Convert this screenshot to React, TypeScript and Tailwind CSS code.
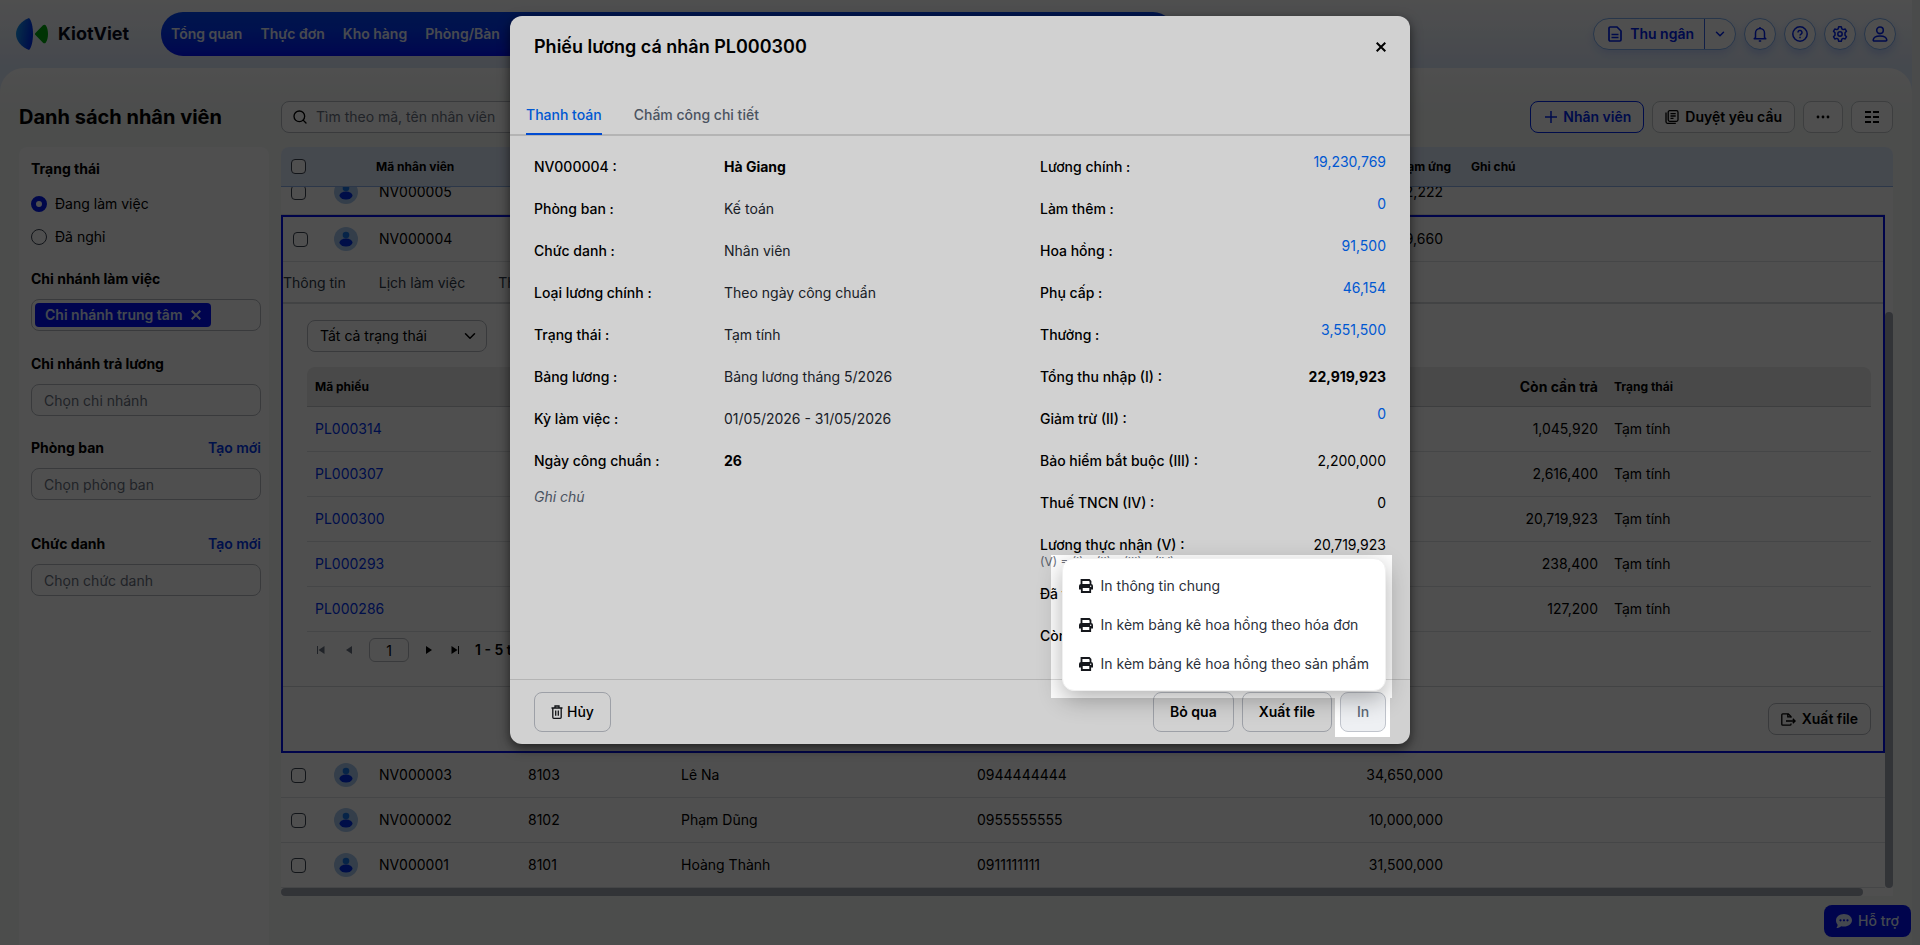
import type { ReactNode } from "react";
import { ChevronDown, Search } from "lucide-react";

const navItems = ["Tổng quan", "Thực đơn", "Kho hàng", "Phòng/Bàn"];

const payslips = [
    { code: "PL000314", due: "1,045,920" },
    { code: "PL000307", due: "2,616,400" },
    { code: "PL000300", due: "20,719,923" },
    { code: "PL000293", due: "238,400" },
    { code: "PL000286", due: "127,200" },
];

const employees = [
    { code: "NV000003", pin: "8103", name: "Lê Na", phone: "0944444444", debt: "34,650,000" },
    { code: "NV000002", pin: "8102", name: "Phạm Dũng", phone: "0955555555", debt: "10,000,000" },
    { code: "NV000001", pin: "8101", name: "Hoàng Thành", phone: "0911111111", debt: "31,500,000" },
];

const info = [
    { label: "NV000004 :", value: "Hà Giang", bold: true },
    { label: "Phòng ban :", value: "Kế toán" },
    { label: "Chức danh :", value: "Nhân viên" },
    { label: "Loại lương chính :", value: "Theo ngày công chuẩn" },
    { label: "Trạng thái :", value: "Tạm tính" },
    { label: "Bảng lương :", value: "Bảng lương tháng 5/2026" },
    { label: "Kỳ làm việc :", value: "01/05/2026 - 31/05/2026" },
    { label: "Ngày công chuẩn :", value: "26", bold: true },
];

const salary = [
    { label: "Lương chính :", value: "19,230,769", link: true },
    { label: "Làm thêm :", value: "0", link: true },
    { label: "Hoa hồng :", value: "91,500", link: true },
    { label: "Phụ cấp :", value: "46,154", link: true },
    { label: "Thưởng :", value: "3,551,500", link: true },
    { label: "Tổng thu nhập (I) :", value: "22,919,923", bold: true },
    { label: "Giảm trừ (II) :", value: "0", link: true },
    { label: "Bảo hiểm bắt buộc (III) :", value: "2,200,000" },
    { label: "Thuế TNCN (IV) :", value: "0" },
];

const printOptions = [
    "In thông tin chung",
    "In kèm bảng kê hoa hồng theo hóa đơn",
    "In kèm bảng kê hoa hồng theo sản phẩm",
];

function Logo() {
    return (
        <svg width="32" height="32" viewBox="0 0 32 32" aria-hidden="true">
            <defs>
                <linearGradient id="logo-blue" x1="0" y1="0" x2="1" y2="0.3">
                    <stop offset="0" stopColor="#18a0e8" />
                    <stop offset="1" stopColor="#0030f0" />
                </linearGradient>
            </defs>
            <path d="M13 0C5.500 3 0 9 0 16s5.500 13 13 16c2.500-2.500 4-9 4-16S15.500 2.500 13 0Z" fill="url(#logo-blue)" />
            <path d="M19.200 15.200 27 7.300c.8-.8 2-.9 2.700 0C31.200 9.200 32 12.500 32 16s-.8 6.800-2.300 8.700c-.7.900-1.900.8-2.700 0l-7.800-7.900c-.4-.5-.4-1.100 0-1.600Z" fill="#00a810" />
        </svg>
    );
}

function PrinterIcon() {
    return (
        <svg width="14" height="14" viewBox="0 0 14 14" fill="none" aria-hidden="true">
            <path d="M2.500 5.500V1h7.700l1.300 1.300v3.200" stroke="#15171c" strokeWidth="1.800" />
            <path d="M2 5h10a2 2 0 0 1 2 2v3.500h-2V9H2v1.500H0V7a2 2 0 0 1 2-2Z" fill="#15171c" />
            <path d="M2.800 9v4h8.400V9" stroke="#15171c" strokeWidth="1.800" />
            <circle cx="11.700" cy="7.200" r=".7" fill="#fff" />
        </svg>
    );
}

function TrashIcon() {
    return (
        <svg width="12" height="14" viewBox="0 0 12 14" fill="none" stroke="#15171c" strokeWidth="1.300" aria-hidden="true">
            <path d="M.5 3h11M4 2.800V1h4v1.800M1.800 3v9.300c0 .6.400 1 1 1h6.400c.6 0 1-.4 1-1V3M4.700 5.500v5.300M7.300 5.500v5.300" />
        </svg>
    );
}

function Avatar() {
    return (
        <svg width="24" height="24" viewBox="0 0 24 24" aria-hidden="true">
            <circle cx="12" cy="12" r="12" fill="#a8c8ee" />
            <circle cx="12" cy="8" r="3.300" fill="#1a78e8" />
            <ellipse cx="12" cy="15.500" rx="6.500" ry="4" fill="#0030e8" />
        </svg>
    );
}

function Check({ label }: { label: string }) {
    return (
        <input
            type="checkbox"
            aria-label={label}
            className="block size-[15px] appearance-none rounded-[4px] border border-[#3c4453] bg-white"
        />
    );
}

function IconButton({ label, children }: { label: string; children: ReactNode }) {
    return (
        <button
            type="button"
            aria-label={label}
            className="flex size-8 items-center justify-center rounded-full border border-[#80b0f0] bg-white text-[#0022f0] shadow-[0_4px_8px_rgba(0,80,255,0.2)]"
        >
            {children}
        </button>
    );
}

function Header() {
    return (
        <header className="flex h-17 items-center bg-linear-to-b from-white to-[#dfe9fb] px-4">
            <div className="flex w-[145px] items-center gap-2.5">
                <Logo />
                <span className="text-lg font-bold text-[#0a0d1c]">KiotViet</span>
            </div>
            <nav className="flex h-11 w-[1014px] items-center gap-[18px] rounded-full bg-linear-to-b from-[#0048f8] to-[#0010ff] pl-2.5 text-sm font-semibold text-[#e8eeff]">
                {navItems.map((item) => (
                    <a key={item} href="#">{item}</a>
                ))}
            </nav>
            <div className="ml-auto flex items-center gap-2 text-[#0022f0]">
                <div className="flex h-8 items-center rounded-full border border-[#80b0f0] bg-white shadow-[0_4px_8px_rgba(0,80,255,0.15)]">
                    <button type="button" className="flex h-full items-center gap-2 pr-2.5 pl-3.5 text-sm font-semibold">
                        <svg width="14" height="16" viewBox="0 0 14 16" fill="none" stroke="currentColor" strokeWidth="1.700" aria-hidden="true">
                            <path d="M1 2.200C1 1.500 1.500 1 2.200 1H9l4 4v8.800c0 .7-.5 1.200-1.200 1.200H2.200C1.500 15 1 14.500 1 13.800V2.200ZM3.500 8.500h7M3.500 11.500h7" />
                        </svg>
                        Thu ngân
                    </button>
                    <button type="button" aria-label="Mở danh sách" className="flex h-full w-[31px] items-center justify-center border-l border-[#3868e8]">
                        <ChevronDown size={14} strokeWidth={2.5} />
                    </button>
                </div>
                <IconButton label="Thông báo">
                    <svg width="16" height="16" viewBox="0 0 16 16" fill="none" stroke="currentColor" strokeWidth="1.500" aria-hidden="true">
                        <path d="M3.500 11.500V7a4.500 4.500 0 0 1 9 0v4.500l1.300 1.200H2.200l1.300-1.200ZM6.800 15h2.400M8 1v1.500" strokeLinejoin="round" />
                    </svg>
                </IconButton>
                <IconButton label="Trợ giúp">
                    <svg width="16" height="16" viewBox="0 0 16 16" fill="none" stroke="currentColor" strokeWidth="1.500" aria-hidden="true">
                        <circle cx="8" cy="8" r="7.200" />
                        <path d="M6 6.400a2 2 0 1 1 3.200 1.600c-.7.500-1.200.8-1.200 1.500M8 10.800v1.400" />
                    </svg>
                </IconButton>
                <IconButton label="Thiết lập">
                    <svg width="16" height="16" viewBox="0 0 16 16" fill="none" stroke="currentColor" strokeWidth="1.500" strokeLinejoin="round" aria-hidden="true">
                        <path d="M6.700.8h2.600l.5 2 1.400.8 2-.6 1.300 2.300L13 6.800v2.400l1.500 1.500-1.300 2.300-2-.6-1.400.8-.5 2H6.700l-.5-2-1.400-.8-2 .6-1.300-2.300L3 9.200V6.800L1.500 5.300 2.800 3l2 .6 1.400-.8.500-2Z" />
                        <circle cx="8" cy="8" r="2.200" />
                    </svg>
                </IconButton>
                <IconButton label="Tài khoản">
                    <svg width="16" height="16" viewBox="0 0 16 16" fill="none" stroke="currentColor" strokeWidth="1.600" aria-hidden="true">
                        <circle cx="8" cy="4.300" r="3.300" />
                        <path d="M2.200 15c-.6 0-1-.4-1-1 .3-2.600 2.600-4 6.800-4s6.500 1.400 6.800 4c0 .6-.4 1-1 1H2.200Z" />
                    </svg>
                </IconButton>
            </div>
        </header>
    );
}

function FilterField({ id, label, placeholder, create }: { id: string; label: string; placeholder: string; create?: boolean }) {
    return (
        <div className="flex flex-col gap-2.5">
            <div className="flex items-center justify-between">
                <label htmlFor={id} className="font-bold">{label}</label>
                {create && <a href="#" className="font-semibold text-[#0038f0]">Tạo mới</a>}
            </div>
            <input id={id} placeholder={placeholder} className="h-8 rounded-lg border border-[#b8bcc2] px-3 placeholder:text-[#6b7280]" />
        </div>
    );
}

function Sidebar() {
    return (
        <aside className="flex min-h-0 flex-1 flex-col rounded-t-lg bg-white pt-3 pr-2 pl-3">
            <fieldset className="flex flex-col">
                <legend className="font-bold">Trạng thái</legend>
                <label className="mt-[15px] flex items-center gap-2">
                    <input type="radio" name="status" defaultChecked className="size-4 appearance-none rounded-full border border-[#3c4453] checked:border-[5px] checked:border-[#0018f0]" />
                    Đang làm việc
                </label>
                <label className="mt-[13px] flex items-center gap-2">
                    <input type="radio" name="status" className="size-4 appearance-none rounded-full border border-[#3c4453]" />
                    Đã nghỉ
                </label>
            </fieldset>
            <div className="mt-[22px] font-bold">Chi nhánh làm việc</div>
            <div className="mt-2.5 flex h-8 items-center rounded-lg border border-[#b8bcc2] pl-[3px]">
                <span className="flex h-6 items-center gap-2 rounded-[4px] bg-[#0010ff] px-2.5 font-semibold text-[#dde6ff]">
                    Chi nhánh trung tâm
                    <button type="button" aria-label="Bỏ chọn">
                        <svg width="10" height="10" viewBox="0 0 10 10" stroke="currentColor" strokeWidth="2" aria-hidden="true">
                            <path d="m.7.7 8.600 8.600m0-8.600L.7 9.300" />
                        </svg>
                    </button>
                </span>
            </div>
            <div className="mt-[23px]">
                <FilterField id="pay-branch" label="Chi nhánh trả lương" placeholder="Chọn chi nhánh" />
            </div>
            <div className="mt-[22px]">
                <FilterField id="department" label="Phòng ban" placeholder="Chọn phòng ban" create />
            </div>
            <div className="mt-[34px]">
                <FilterField id="position" label="Chức danh" placeholder="Chọn chức danh" create />
            </div>
        </aside>
    );
}

function Toolbar() {
    return (
        <div className="flex items-center gap-2">
            <label className="flex h-8 w-[420px] items-center gap-2 rounded-lg border border-[#b8bcc2] bg-white px-2.5">
                <Search size={16} strokeWidth={2} />
                <input aria-label="Tìm nhân viên" placeholder="Tìm theo mã, tên nhân viên" className="flex-1 placeholder:text-[#6b7280]" />
            </label>
            <button type="button" className="ml-auto flex h-8 items-center gap-1.5 rounded-lg border border-[#0028f0] bg-white pr-3 pl-3.5 font-semibold text-[#0028f0]">
                <svg width="12" height="12" viewBox="0 0 12 12" stroke="currentColor" strokeWidth="1.500" aria-hidden="true">
                    <path d="M6 0v12M0 6h12" />
                </svg>
                Nhân viên
            </button>
            <button type="button" className="flex h-8 items-center gap-1.5 rounded-lg border border-[#c4c8cc] bg-white px-3 font-semibold">
                <svg width="14" height="14" viewBox="0 0 14 14" fill="none" stroke="currentColor" strokeWidth="1.300" aria-hidden="true">
                    <rect x="3.200" y=".7" width="9.800" height="10.600" rx="1.500" />
                    <path d="M5.500 3.700h5.200M5.500 6h5.200M5.500 8.300h3M1 2.500v9.300c0 .9.600 1.500 1.500 1.500h8.300" />
                </svg>
                Duyệt yêu cầu
            </button>
            <button type="button" aria-label="Thêm" className="flex h-8 w-10 items-center justify-center rounded-lg border border-[#c4c8cc] bg-white">
                <svg width="14" height="4" viewBox="0 0 14 4" aria-hidden="true">
                    <circle cx="2" cy="2" r="1.400" /><circle cx="7" cy="2" r="1.400" /><circle cx="12" cy="2" r="1.400" />
                </svg>
            </button>
            <button type="button" aria-label="Chọn cột" className="flex h-8 w-[42px] items-center justify-center rounded-lg border border-[#c4c8cc] bg-white">
                <svg width="16" height="14" viewBox="0 0 16 14" stroke="currentColor" strokeWidth="1.800" aria-hidden="true">
                    <path d="M1 2h6M9 2h6M1 7h6M9 7h6M1 12h6M9 12h6" />
                </svg>
            </button>
        </div>
    );
}

function Columns() {
    return (
        <colgroup>
            <col className="w-[53px]" />
            <col className="w-[45px]" />
            <col className="w-[149px]" />
            <col className="w-[153px]" />
            <col className="w-[296px]" />
            <col className="w-[276px]" />
            <col className="w-[198px]" />
            <col />
        </colgroup>
    );
}

type Employee = { code: string; pin?: string; name?: string; phone?: string; debt: string };

function EmployeeRow({ row }: { row: Employee }) {
    return (
        <tr className="h-[45px] [&>td]:border-b [&>td]:border-[#dfe1e4]">
            <td className="pl-2.5"><Check label={row.code} /></td>
            <td><Avatar /></td>
            <td>{row.code}</td>
            <td>{row.pin}</td>
            <td>{row.name}</td>
            <td>{row.phone}</td>
            <td className="pr-2 text-right">{row.debt}</td>
            <td />
        </tr>
    );
}

function EmployeeDetail() {
    return (
        <section className="border-2 border-[#0010f0]">
            <div className="flex h-[45px] items-center border-b border-[#dfe1e4] pl-2.5">
                <div className="w-[41px]"><Check label="NV000004" /></div>
                <div className="w-[45px]"><Avatar /></div>
                <div className="w-[149px]">NV000004</div>
                <div className="w-[915px] text-right">9,660</div>
            </div>
            <div className="flex h-[42px] items-center gap-[33px] border-b-2 border-[#d4d7db] pt-0.5 text-[#303a4a]">
                <a href="#">Thông tin</a>
                <a href="#">Lịch làm việc</a>
                <a href="#">Thiết lập lương</a>
            </div>
            <div className="pt-4 pr-3 pl-6">
                <div className="relative w-[180px]">
                    <select aria-label="Trạng thái phiếu" className="h-8 w-full appearance-none rounded-lg border border-[#b8bcc2] bg-white px-3">
                        <option>Tất cả trạng thái</option>
                    </select>
                    <ChevronDown size={18} className="pointer-events-none absolute top-[7px] right-2" />
                </div>
                <table className="mt-[15px] w-full table-fixed border-separate border-spacing-0">
                    <colgroup>
                        <col />
                        <col className="w-[300px]" />
                        <col className="w-[265px]" />
                    </colgroup>
                    <thead>
                        <tr className="h-10 text-left text-xs">
                            <th className="rounded-tl-lg border-b border-[#c4c8cc] bg-[#ececec] pl-2">Mã phiếu</th>
                            <th className="border-b border-[#c4c8cc] bg-[#ececec] pr-2 text-right text-sm">Còn cần trả</th>
                            <th className="rounded-tr-lg border-b border-[#c4c8cc] bg-[#ececec] pl-2">Trạng thái</th>
                        </tr>
                    </thead>
                    <tbody>
                        {payslips.map((slip) => (
                            <tr key={slip.code} className="h-[45px]">
                                <td className="border-b border-[#dfe1e4] pl-2"><a href="#" className="text-[#0032f0]">{slip.code}</a></td>
                                <td className="border-b border-[#dfe1e4] pr-2 text-right">{slip.due}</td>
                                <td className="border-b border-[#dfe1e4] pl-2">Tạm tính</td>
                            </tr>
                        ))}
                    </tbody>
                </table>
                <div className="mt-1.5 flex h-6 items-center">
                    <button type="button" aria-label="Trang đầu" className="flex w-7 justify-center text-[#6b7280]">
                        <svg width="8" height="8" viewBox="0 0 8 8" fill="currentColor" aria-hidden="true"><path d="M0 0h1v8H0zM7.500 0v8L1.500 4z" /></svg>
                    </button>
                    <button type="button" aria-label="Trang trước" className="flex w-7 justify-center text-[#6b7280]">
                        <svg width="8" height="8" viewBox="0 0 8 8" fill="currentColor" aria-hidden="true"><path d="M7 0v8L1 4z" /></svg>
                    </button>
                    <input aria-label="Trang" defaultValue="1" className="mx-1.5 h-6 w-10 rounded-md border border-[#b8bcc2] text-center" />
                    <button type="button" aria-label="Trang sau" className="flex w-7 justify-center">
                        <svg width="8" height="8" viewBox="0 0 8 8" fill="currentColor" aria-hidden="true"><path d="M1 0v8l6-4z" /></svg>
                    </button>
                    <button type="button" aria-label="Trang cuối" className="flex w-6 justify-center">
                        <svg width="8" height="8" viewBox="0 0 8 8" fill="currentColor" aria-hidden="true"><path d="M7 0h1v8H7zM.5 0v8l6-4z" /></svg>
                    </button>
                    <span className="ml-2 font-semibold">1 - 5 trong</span>
                </div>
            </div>
            <div className="mt-6 flex h-[65px] items-center justify-end border-t border-[#d4d7db] pr-3">
                <button type="button" className="flex h-8 items-center gap-1.5 rounded-lg border border-[#b8bcc2] px-3 font-semibold">
                    <svg width="15" height="13" viewBox="0 0 15 13" fill="none" stroke="currentColor" strokeWidth="1.300" aria-hidden="true">
                        <path d="M10 4.800V3.500L7.300.8H1.800c-.6 0-1 .4-1 1v9.400c0 .6.400 1 1 1h7.200c.6 0 1-.4 1-1v-.8M6.800.8v3h3.200M5 8h9M11.800 5.700 14.100 8l-2.300 2.300" />
                    </svg>
                    Xuất file
                </button>
            </div>
        </section>
    );
}

function EmployeeTable() {
    return (
        <div className="overflow-hidden rounded-t-lg bg-white">
            <table className="w-full table-fixed border-separate border-spacing-0">
                <Columns />
                <thead>
                    <tr className="h-10 bg-[#e0eafb] text-left text-xs [&>th]:border-b [&>th]:border-[#8fb4ea]">
                        <th className="pl-2.5"><Check label="Chọn tất cả" /></th>
                        <th colSpan={2} className="pl-[42px]">Mã nhân viên</th>
                        <th />
                        <th />
                        <th />
                        <th className="text-right">Nợ và tạm ứng</th>
                        <th className="pl-5">Ghi chú</th>
                    </tr>
                </thead>
            </table>
            <div className="flex overflow-hidden">
                {/* list is scrolled a little, the first row slides under the header */}
                <div className="-mt-[17px] min-w-0 flex-1">
                    <table className="w-full table-fixed border-separate border-spacing-0">
                        <Columns />
                        <tbody>
                            <EmployeeRow row={{ code: "NV000005", debt: "2,222" }} />
                        </tbody>
                    </table>
                    <EmployeeDetail />
                    <table className="w-full table-fixed border-separate border-spacing-0">
                        <Columns />
                        <tbody>
                            {employees.map((row) => (
                                <EmployeeRow key={row.code} row={row} />
                            ))}
                        </tbody>
                    </table>
                </div>
                <div className="flex w-2 flex-col pt-[125px]">
                    <div className="flex-1 rounded-full bg-[#a4a8b4]" />
                </div>
            </div>
            <div className="h-2 pr-[30px]">
                <div className="h-2 rounded-full bg-[#a4a8b4]" />
            </div>
        </div>
    );
}

function PrintMenu() {
    return (
        <ul className="absolute right-0 bottom-[41px] z-10 flex flex-col rounded-xl border border-[#f0f0f0] bg-white py-[7px] font-normal whitespace-nowrap text-[#2b303a] shadow-[0_8px_24px_rgba(0,0,0,0.3)]">
            {printOptions.map((option) => (
                <li key={option}>
                    <button type="button" className="flex h-[39px] w-full items-center gap-2 px-4">
                        <PrinterIcon />
                        {option}
                    </button>
                </li>
            ))}
        </ul>
    );
}

function PayslipDialog() {
    return (
        <div role="dialog" aria-labelledby="payslip-title" className="flex w-[900px] flex-col rounded-xl bg-white shadow-[0_4px_12px_rgba(0,0,0,0.6)]">
            <div className="flex h-[62px] items-center justify-between px-6">
                <h2 id="payslip-title" className="text-lg font-semibold">Phiếu lương cá nhân PL000300</h2>
                <button type="button" aria-label="Đóng">
                    <svg width="10" height="10" viewBox="0 0 10 10" stroke="currentColor" strokeWidth="2" aria-hidden="true">
                        <path d="m.7.7 8.600 8.600m0-8.600L.7 9.300" />
                    </svg>
                </button>
            </div>
            <div className="mt-4 flex h-[42px] gap-8 border-b-2 border-[#dcdcdc] px-4 font-medium">
                <button type="button" className="-mb-px flex items-center border-b-2 border-[#005cff] pt-0.5 text-[#006cff]">Thanh toán</button>
                <button type="button" className="flex items-center pt-0.5 text-[#5b6676]">Chấm công chi tiết</button>
            </div>
            <div className="grid grid-cols-[506px_1fr] px-6 pt-2.5 pb-[22px]">
                <div>
                    {info.map((row) => (
                        <div key={row.label} className="flex h-[42px] items-center">
                            <span className="w-[190px] font-medium">{row.label}</span>
                            <span className={row.bold ? "font-bold" : "text-[#23272f]"}>{row.value}</span>
                        </div>
                    ))}
                    <p className="mt-[5px] text-[#5b6676] italic">Ghi chú</p>
                </div>
                <div>
                    {salary.map((row) => (
                        <div key={row.label} className="flex h-[42px] items-center justify-between">
                            <span className="font-medium">{row.label}</span>
                            {row.link ? (
                                <a href="#" className="pb-2.5 text-[#006cff]">{row.value}</a>
                            ) : (
                                <span className={row.bold ? "font-bold" : ""}>{row.value}</span>
                            )}
                        </div>
                    ))}
                    <div className="flex h-[49px] justify-between pt-[11px]">
                        <div className="font-medium">
                            Lương thực nhận (V) :
                            <small className="block text-xs leading-[14px] font-normal text-[#6b7280]">(V) = (I) - (II) - (III) - (IV)</small>
                        </div>
                        <span>20,719,923</span>
                    </div>
                    <div className="flex h-[42px] items-center font-medium">Đã trả :</div>
                    <div className="flex h-[42px] items-center font-medium">Còn cần trả :</div>
                </div>
            </div>
            <div className="flex h-[65px] items-center gap-2 border-t border-[#dcdcdc] px-6 font-semibold">
                <button type="button" className="mr-auto flex h-10 items-center gap-1 rounded-lg border border-[#c0c4cc] px-4 font-medium">
                    <TrashIcon />
                    Hủy
                </button>
                <button type="button" className="h-10 rounded-lg border border-[#c0c4cc] px-4">Bỏ qua</button>
                <button type="button" className="h-10 rounded-lg border border-[#c0c4cc] px-4">Xuất file</button>
                <div className="relative">
                    <button type="button" className="h-10 w-[46px] rounded-lg border border-[#c0c4cc] bg-[#eef0f3] font-medium text-[#5b6676]">In</button>
                    <PrintMenu />
                </div>
            </div>
        </div>
    );
}

export default function App() {
    return (
        <div className="relative h-screen overflow-hidden bg-[#f0f2f1] font-['Inter','Noto_Sans',sans-serif] text-sm leading-5 text-black">
            <div className="flex h-full flex-col pr-2">
                <Header />
                <div className="min-h-0 flex-1 bg-[#dfe9fb]">
                    <main className="flex h-full gap-3 rounded-t-[24px] bg-linear-to-b from-white to-[#f3f7f5] to-5% px-[19px] pt-[33px]">
                        <div className="flex w-[250px] flex-col gap-3.5">
                            <h1 className="flex h-8 items-center text-xl font-bold">Danh sách nhân viên</h1>
                            <Sidebar />
                        </div>
                        <div className="flex min-w-0 flex-1 flex-col gap-3.5">
                            <Toolbar />
                            <EmployeeTable />
                        </div>
                    </main>
                </div>
            </div>
            <button type="button" className="absolute right-[9px] bottom-2 flex h-8 items-center gap-1.5 rounded-lg bg-[#0010f8] px-3 font-medium text-[#dde6ff]">
                <svg width="16" height="14" viewBox="0 0 16 14" fill="currentColor" aria-hidden="true">
                    <path fillRule="evenodd" d="M8 0c4.400 0 8 2.800 8 6.300s-3.600 6.300-8 6.300c-1 0-2-.2-2.900-.4C4 13.200 2.300 14 .4 14c.7-.9 1.200-2.100 1.200-3.300C.6 9.500 0 8 0 6.300 0 2.800 3.600 0 8 0ZM4.500 5.200a1.100 1.100 0 1 0 0 2.200 1.100 1.100 0 0 0 0-2.200Zm3.500 0a1.100 1.100 0 1 0 0 2.200 1.100 1.100 0 0 0 0-2.200Zm3.500 0a1.100 1.100 0 1 0 0 2.200 1.100 1.100 0 0 0 0-2.200Z" />
                </svg>
                Hỗ trợ
            </button>

            <div className="absolute inset-0 flex items-start justify-center bg-black/62 pt-4">
                <PayslipDialog />
            </div>

            {/* guide overlay with an opening around the print menu and its button */}
            <div className="pointer-events-none absolute inset-0 bg-black/18 [clip-path:polygon(evenodd,0_0,100%_0,100%_100%,0_100%,0_0,calc(50%_+_91px)_555px,calc(50%_+_432px)_555px,calc(50%_+_432px)_698px,calc(50%_+_430px)_698px,calc(50%_+_430px)_737px,calc(50%_+_375px)_737px,calc(50%_+_375px)_698px,calc(50%_+_91px)_698px,calc(50%_+_91px)_555px,0_0)]" />
        </div>
    );
}
